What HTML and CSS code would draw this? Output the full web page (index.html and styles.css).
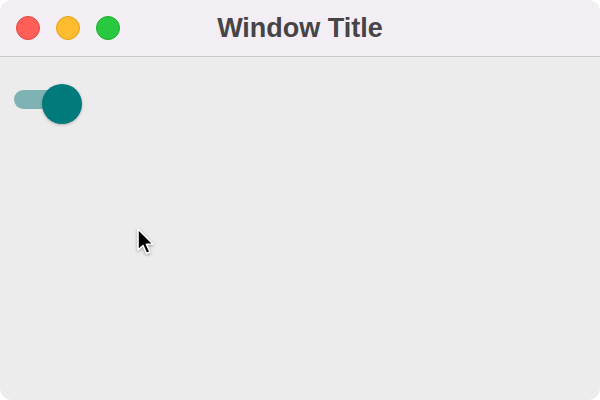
FILE: index.html
```html
<!DOCTYPE html>
<html lang="en">
<head>
    <meta charset="UTF-8">
    <title>Window Title</title>
    <link rel="stylesheet" href="styles.css">
</head>
<body>
    <div class="window">
        <!-- 타이틀 바 -->
        <div class="titlebar">
            <div class="lights">
                <span class="light red"></span>
                <span class="light yellow"></span>
                <span class="light green"></span>
            </div>
            <h1 class="title">Window Title</h1>
        </div>

        <!-- 본문 -->
        <div class="content">
            <label class="switch">
                <input type="checkbox" checked>
                <span class="track"></span>
                <span class="thumb"></span>
            </label>
        </div>

        <!-- 마우스 커서 -->
        <svg class="cursor" width="22" height="30" viewBox="0 0 22 30">
            <path d="M2 1 L2 22 L7 17.5 L10.5 25.5 L14 24 L10.5 16.3 L17 16 Z" fill="#000" stroke="#fff" stroke-width="1.6" stroke-linejoin="round"/>
        </svg>
    </div>
</body>
</html>
```

FILE: styles.css
```css
html, body{
    margin: 0;
    padding: 0;
    background: #fff;
}
.window{
    position: relative;
    width: 600px;
    height: 400px;
    border-radius: 12px;
    overflow: hidden;
    background: #ececec;
    font-family: "Liberation Sans", Arial, sans-serif;
}

/* 타이틀 바 */
.titlebar{
    position: relative;
    display: flex;
    align-items: center;
    justify-content: center;
    height: 56px;
    background: #f3eef4;
    border-bottom: 1px solid #c9c7ca;
}
.lights{
    position: absolute;
    left: 16px;
    top: 16px;
    display: flex;
    gap: 16px;
}
.light{
    width: 24px;
    height: 24px;
    border-radius: 50%;
    box-sizing: border-box;
}
.red{
    background: #ff5f57;
    border: 1px solid #e2463f;
}
.yellow{
    background: #febc2e;
    border: 1px solid #e1a116;
}
.green{
    background: #28c840;
    border: 1px solid #1aab29;
}
.title{
    margin: 0;
    font-size: 27px;
    font-weight: bold;
    color: #464446;
}

/* 스위치 */
.content{
    padding: 27px 14px;
}
.switch{
    position: relative;
    display: block;
    width: 68px;
    height: 40px;
}
.switch input{
    display: none;
}
.track{
    position: absolute;
    left: 0;
    top: 6px;
    width: 54px;
    height: 19px;
    border-radius: 10px;
    background: #7fb2b3;
}
.thumb{
    position: absolute;
    left: 28px;
    top: 0;
    width: 40px;
    height: 40px;
    border-radius: 50%;
    background: #017a7b;
    box-shadow: 0 1px 3px rgba(0,0,0,.25);
}

/* 커서 */
.cursor{
    position: absolute;
    left: 136px;
    top: 228px;
    filter: drop-shadow(0 1px 1.5px rgba(0,0,0,.35));
}
```
